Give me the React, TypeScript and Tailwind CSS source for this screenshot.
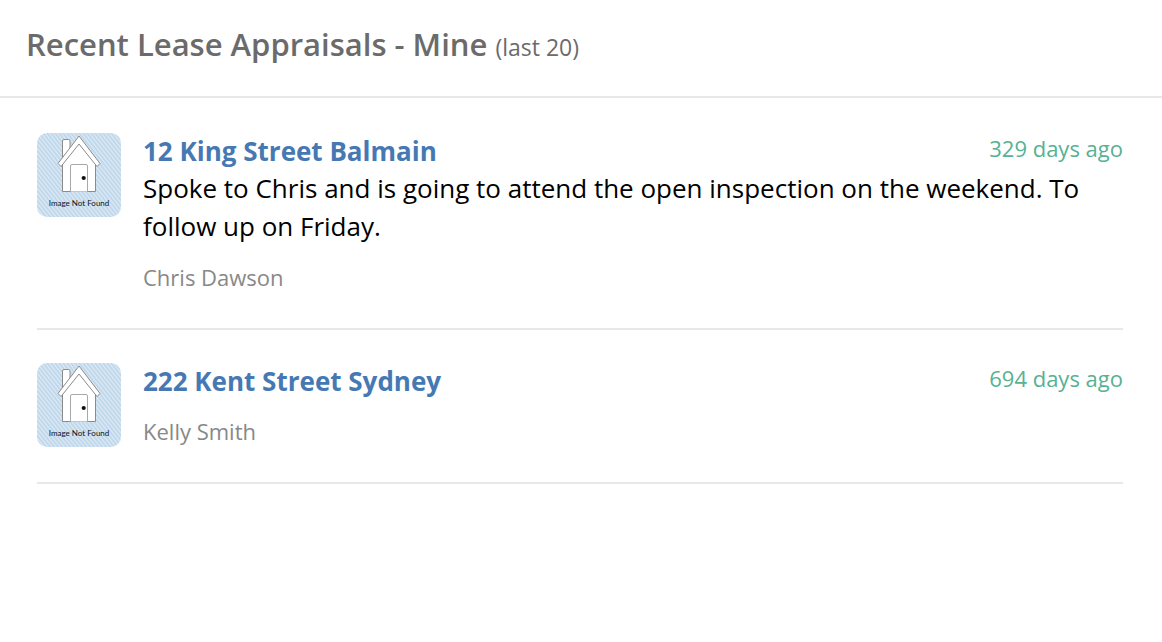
const appraisals = [
  {
    id: 1,
    address: "12 King Street Balmain",
    note: "Spoke to Chris and is going to attend the open inspection on the weekend. To follow up on Friday.",
    contact: "Chris Dawson",
    age: "329 days ago",
  },
  { id: 2, address: "222 Kent Street Sydney", note: "", contact: "Kelly Smith", age: "694 days ago" },
];

function HousePlaceholder() {
  return (
    <svg viewBox="0 0 84 84" role="img" aria-label="Image Not Found" className="size-21 shrink-0 rounded-[10px]">
      <defs>
        <pattern id="hatch" width="4" height="5" patternUnits="userSpaceOnUse">
          <rect width="4" height="5" fill="#bfd7eb" />
          <path d="M-4 -5L8 10M0 -5L8 5M-4 0L4 10" stroke="#d8e7f3" strokeWidth="1.5" />
        </pattern>
      </defs>
      <rect width="84" height="84" fill="url(#hatch)" />
      <g fill="#fff" stroke="#8b8b8b" strokeWidth="1" strokeLinejoin="round">
        <path d="M25.5 24V8Q25.5 6.5 27 6.5H31.5Q33 6.5 33 8V16" />
        <path d="M25.5 30V58.5H58.5V30L42 10Z" />
        <path d="M42 3L21 30.5L24 33.5L42 11L60 33.5L63 30.5Z" />
        <path d="M33.5 58.5V33Q33.5 31.5 35 31.5H49Q50.5 31.5 50.5 33V58.5" stroke="#a8a8a8" />
      </g>
      <circle cx="46.7" cy="45" r="2.1" fill="#111" />
      <text x="42" y="73" textAnchor="middle" fontSize="8" fill="#111" fontFamily="Lato, sans-serif">
        Image Not Found
      </text>
    </svg>
  );
}

export default function App() {
  return (
    <main className="min-h-screen bg-white font-['Open_Sans',sans-serif]">
      <header className="border-b-2 border-[#e8e8e8] px-[26px] pt-[22px] pb-[27px]">
        <h1 className="text-[31px] leading-[44px] font-semibold text-[#6b6b6b]">
          Recent Lease Appraisals - Mine <small className="text-[23px] font-normal">(last 20)</small>
        </h1>
      </header>
      <ul className="pt-0.5 pr-[39px] pl-[37px]">
        {appraisals.map((item) => (
          <li key={item.id} className="flex gap-[22px] border-b-2 border-[#e8e8e8] pt-[33px] pb-[35px]">
            <HousePlaceholder />
            <div className="min-w-0 flex-1">
              <div className="flex justify-between">
                <a href="#" className="text-[26px] leading-9 font-bold text-[#4679b3]">
                  {item.address}
                </a>
                <time className="text-[22px] leading-[30px] text-[#56b293]">{item.age}</time>
              </div>
              {item.note && <p className="text-[26px] leading-[38px] text-black">{item.note}</p>}
              <p className="mt-4 text-[22px] leading-8 text-[#888]">{item.contact}</p>
            </div>
          </li>
        ))}
      </ul>
    </main>
  );
}
